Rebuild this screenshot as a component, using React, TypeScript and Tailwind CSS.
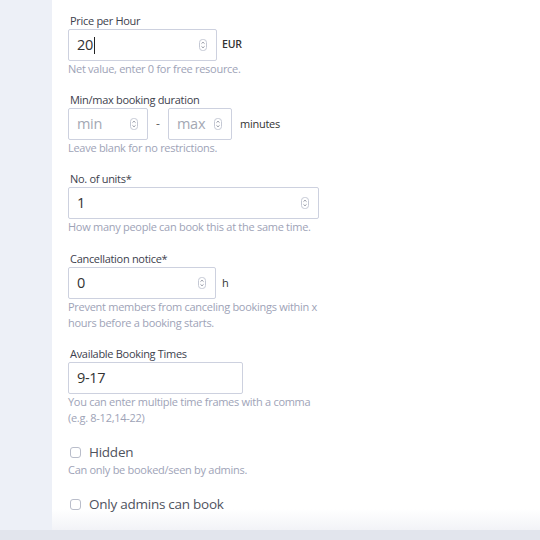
import { ReactNode } from 'react';

const font = { fontFamily: '"Open Sans", "Liberation Sans", sans-serif' };

const Spinner = () => (
  <svg width="8" height="12" viewBox="0 0 8 12" className="shrink-0">
    <rect x="0.5" y="0.5" width="7" height="11" rx="3" fill="#fff" stroke="#c4c8d4" />
    <path d="M2.5 4.6 L4 3.2 L5.5 4.6" fill="none" stroke="#8a8f9c" strokeWidth="0.9" />
    <path d="M2.5 7.4 L4 8.8 L5.5 7.4" fill="none" stroke="#8a8f9c" strokeWidth="0.9" />
  </svg>
);

interface BoxProps {
  width: string;
  value: string;
  placeholder?: boolean;
  spinner?: boolean;
  cursor?: boolean;
}

const Box = ({ width, value, placeholder, spinner = true, cursor }: BoxProps) => (
  <div
    className={`${width} h-8 flex items-center justify-between pl-2 pr-[9px] border border-[#cdd1df] rounded-[2px] bg-white`}
  >
    <span
      className={`text-[14.5px] tracking-[-0.3px] leading-5 ${placeholder ? 'text-[#a4a8b4]' : 'text-[#333]'} flex items-center`}
    >
      {value}
      {cursor && <span className="inline-block w-px h-[17px] bg-[#222] ml-px" />}
    </span>
    {spinner && <Spinner />}
  </div>
);

const Label = ({ children }: { children: ReactNode }) => (
  <div className="pl-[2px] text-[11px] tracking-[-0.3px] leading-4 text-[#3d414d]">{children}</div>
);

const Help = ({ children }: { children: ReactNode }) => (
  <div className="text-[11px] tracking-[-0.28px] leading-4 text-[#9ea3b7]">{children}</div>
);

const Check = ({ label }: { label: string }) => (
  <div className="flex items-center h-5">
    <span className="w-[11px] h-[11px] ml-[2px] border border-[#b9bdca] rounded-[3px] bg-white" />
    <span className="ml-[8px] text-[13.5px] tracking-[-0.25px] leading-5 text-[#4f535e]">{label}</span>
  </div>
);

export default function App() {
  return (
    <div className="w-[540px] h-[540px] flex flex-col overflow-hidden" style={font}>
      <div className="flex h-[530px]">
        <div className="w-[52px] bg-[#edf0f7]" />
        <div className="flex-1 pl-4 pt-[13px] bg-[linear-gradient(to_bottom,#ffffff_96%,#f2f3f7)]">
          <div className="mb-[15px]">
            <Label>Price per Hour</Label>
            <div className="flex items-center">
              <Box width="w-[149px]" value="20" cursor />
              <span className="ml-[5px] text-[10.5px] tracking-[-0.2px] font-semibold text-[#333]">EUR</span>
            </div>
            <Help>Net value, enter 0 for free resource.</Help>
          </div>

          <div className="mb-[15px]">
            <Label>Min/max booking duration</Label>
            <div className="flex items-center">
              <Box width="w-[80px]" value="min" placeholder />
              <span className="mx-[7px] w-[6px] text-[12px] text-[#666] text-center">-</span>
              <Box width="w-[64px]" value="max" placeholder />
              <span className="ml-[8px] text-[11px] tracking-[-0.25px] text-[#333]">minutes</span>
            </div>
            <Help>Leave blank for no restrictions.</Help>
          </div>

          <div className="mb-[16px]">
            <Label>No. of units*</Label>
            <Box width="w-[251px]" value="1" />
            <Help>How many people can book this at the same time.</Help>
          </div>

          <div className="mb-[15px]">
            <Label>Cancellation notice*</Label>
            <div className="flex items-center">
              <Box width="w-[148px]" value="0" />
              <span className="ml-[6px] text-[11px] text-[#333]">h</span>
            </div>
            <Help>
              Prevent members from canceling bookings within x
              <br />
              hours before a booking starts.
            </Help>
          </div>

          <div className="mb-[16px]">
            <Label>Available Booking Times</Label>
            <Box width="w-[175px]" value="9-17" spinner={false} />
            <Help>
              You can enter multiple time frames with a comma
              <br />
              (e.g. 8-12,14-22)
            </Help>
          </div>

          <div className="mb-[16px]">
            <Check label="Hidden" />
            <Help>Can only be booked/seen by admins.</Help>
          </div>

          <Check label="Only admins can book" />
        </div>
      </div>
      <div className="h-[10px] bg-[#e2e5ed]" />
    </div>
  );
}
